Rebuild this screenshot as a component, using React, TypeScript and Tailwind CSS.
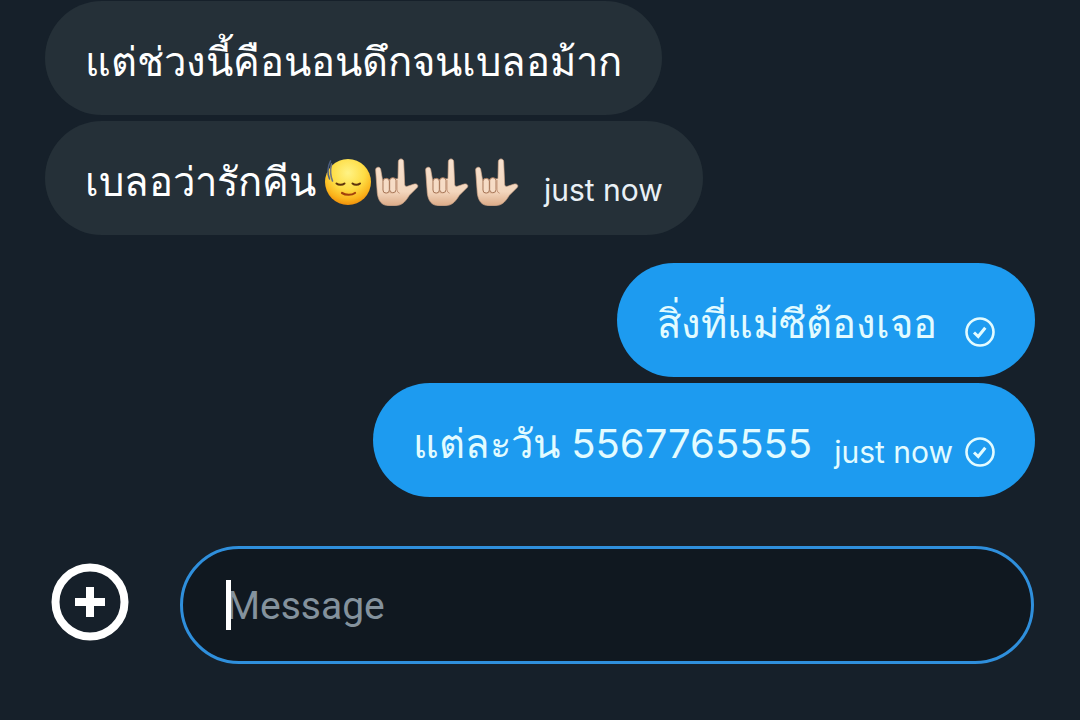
import React from 'react';

interface Message {
    id: number;
    text: string;
    mine: boolean;
    emoji?: string[];
    time?: string;
}

const received: Message[] = [
    { id: 1, text: 'แต่ช่วงนี้คือนอนดึกจนเบลอม้าก', mine: false },
    { id: 2, text: 'เบลอว่ารักคีน', mine: false, emoji: ['face', 'hand', 'hand', 'hand'], time: 'just now' },
];

const sent: Message[] = [
    { id: 3, text: 'สิ่งที่แม่ซีต้องเจอ', mine: true },
    { id: 4, text: 'แต่ละวัน 5567765555', mine: true, time: 'just now' },
];

const FaceEmoji = () => (
    <svg viewBox="0 0 48 48" className="h-12 w-12 shrink-0" role="img" aria-label="😓">
        <defs>
            <radialGradient id="face" cx="0.5" cy="0.3" r="0.72">
                <stop offset="0" stopColor="#fff385" />
                <stop offset="0.5" stopColor="#fedd45" />
                <stop offset="0.8" stopColor="#fbb41c" />
                <stop offset="1" stopColor="#ee8a08" />
            </radialGradient>
        </defs>
        <circle cx="24" cy="24" r="23" fill="url(#face)" />
        <g fill="none" strokeLinecap="round">
            <path d="M6.500 3C3.500 9 3.500 16 5.500 21" stroke="#4d5f80" strokeWidth="1.500" />
            <path d="M7.500 6C6 12 6.500 18 8.500 23" stroke="#6e7480" strokeWidth="1.600" />
            <path d="M12.500 25.500C14.500 27.300 18.500 27.300 20.500 25.500" stroke="#5e340c" strokeWidth="2" />
            <path d="M28.500 25.500C30.500 27.300 34 27.300 36 25.500" stroke="#5e340c" strokeWidth="2" />
            <path d="M18 35C21.500 37.300 28 37.300 31 35" stroke="#a2400c" strokeWidth="2.200" />
        </g>
    </svg>
);

const HandEmoji = () => (
    <svg viewBox="15 22 144 144" className="h-12 w-12 shrink-0" role="img" aria-label="🤟🏻">
        <defs>
            <linearGradient id="skin" x1="0" y1="0" x2="0" y2="1">
                <stop offset="0" stopColor="#f7e2d0" />
                <stop offset="0.7" stopColor="#f3d6bd" />
                <stop offset="1" stopColor="#dcab88" />
            </linearGradient>
        </defs>
        <path
            d="M20 58C19 49 33 46 35 56L41 90L87 84L88 33C88 22 104 22 104 33L107 102C108 106 111 108 115 107L136 100C145 98 150 106 143 112L121 134C111 150 101 165 78 165H60C38 165 28 151 25 128Z"
            fill="url(#skin)"
            stroke="#d3a78a"
            strokeWidth="2"
        />
        <path d="M41 90V124Q50 134 61 126Q70 134 81 124V90" fill="#e5bd9f" />
        <rect x="42" y="83" width="19" height="44" rx="9" fill="#f6dcc6" stroke="#a8785a" strokeWidth="3" />
        <rect x="62" y="81" width="19" height="45" rx="9" fill="#f6dcc6" stroke="#a8785a" strokeWidth="3" />
        <path d="M84 88V118Q85 126 92 128" fill="none" stroke="#c6977a" strokeWidth="3" />
    </svg>
);

const SentIcon = () => (
    <svg viewBox="0 0 30 30" className="h-[30px] w-[30px] shrink-0" fill="none" stroke="currentColor" role="img" aria-label="Sent">
        <circle cx="15" cy="15" r="13.500" strokeWidth="2.600" />
        <path d="M9 15.500L13.200 19.500L20.300 10.700" strokeWidth="3" />
    </svg>
);

const Bubble: React.FC<{ message: Message }> = ({ message }) => (
    <li
        className={
            message.mine
                ? 'flex min-h-[114px] items-center self-end rounded-[57px] bg-[#1d9bf0] px-10 pt-2 text-[#e2fbff]'
                : 'flex min-h-[114px] items-center self-start rounded-[57px] bg-[#253038] px-10 pt-2 text-white'
        }
    >
        <p className="flex items-center gap-2 text-[40px] leading-[60px]">
            {message.text}
            {message.emoji && (
                <span className="flex items-center gap-0.5">
                    {message.emoji.map((name, index) => (name === 'face' ? <FaceEmoji key={index} /> : <HandEmoji key={index} />))}
                </span>
            )}
        </p>
        {(message.time || message.mine) && (
            <span className={`flex items-center gap-3 pt-4 text-[30px] leading-10 ${message.time ? 'ml-[22px]' : 'ml-7'}`}>
                {message.time && <time className={message.mine ? '' : 'text-[#e9f0f6]'}>{message.time}</time>}
                {message.mine && <SentIcon />}
            </span>
        )}
    </li>
);

const App = () => {
    const [draft, setDraft] = React.useState('');

    return (
        <main className="flex min-h-screen flex-col bg-[#16202a] pt-px font-[Inter,'Noto_Sans',sans-serif]">
            <ul className="flex flex-col gap-1.5 px-[45px]">
                {received.map((message) => (
                    <Bubble key={message.id} message={message} />
                ))}
            </ul>
            <ul className="mt-7 flex flex-col gap-1.5 px-[45px]">
                {sent.map((message) => (
                    <Bubble key={message.id} message={message} />
                ))}
            </ul>

            <form className="mt-[49px] flex items-center gap-[51px] pr-[46px] pl-[51px]" onSubmit={(e) => e.preventDefault()}>
                <button type="button" aria-label="Add attachment" className="-mt-1.5 shrink-0 text-white">
                    <svg viewBox="0 0 78 78" className="h-[78px] w-[78px]" fill="none" stroke="currentColor" strokeWidth="8">
                        <circle cx="39" cy="39" r="34.500" />
                        <path d="M24 39H54M39 24V54" />
                    </svg>
                </button>
                <div className="relative min-w-0 flex-1">
                    <input
                        type="text"
                        aria-label="Message"
                        placeholder="Message"
                        value={draft}
                        onChange={(e) => setDraft(e.target.value)}
                        className="h-[118px] w-full rounded-full border-3 border-[#2f8fdc] bg-[#101820] px-[43px] pt-0.5 font-[Roboto,sans-serif] text-[39px] text-white caret-transparent outline-none placeholder:text-[#84929d] focus:caret-white"
                    />
                    {!draft && <span className="pointer-events-none absolute top-[34px] left-[46px] h-[50px] w-[5px] bg-white" />}
                </div>
            </form>
        </main>
    );
};

export default App;
